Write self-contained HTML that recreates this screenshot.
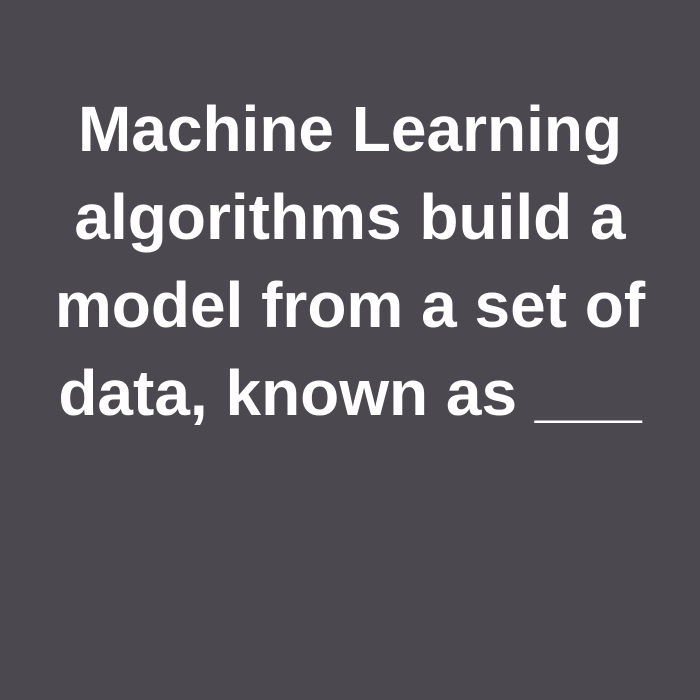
<!DOCTYPE html>
<html><head><style>
html,body{margin:0;padding:0;}
body{width:700px;height:700px;background:#4b4850;overflow:hidden;}
.t{position:absolute;left:0;top:85px;width:700px;text-align:center;color:#fff;
font-family:"Liberation Sans",sans-serif;font-weight:bold;font-size:64px;line-height:88px;}
</style></head><body>
<div class="t">Machine Learning<br>algorithms build a<br>model from a set of<br>data, known as ___</div>
</body></html>
